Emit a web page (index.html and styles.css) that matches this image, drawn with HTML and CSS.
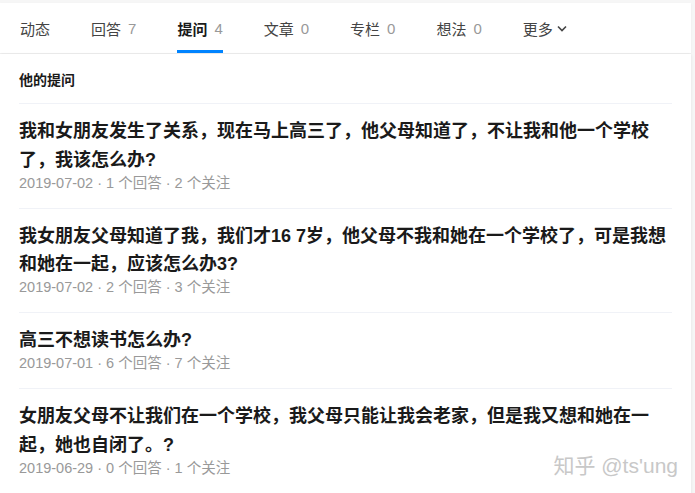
FILE: index.html
```html
<!DOCTYPE html>
<html lang="zh-CN">
<head>
  <meta charset="UTF-8">
  <meta name="viewport" content="width=device-width, initial-scale=1.0">
  <title>他的提问</title>
  <link rel="stylesheet" href="styles.css">
</head>
<body>
  <div class="profile-main">
    <!-- 顶部标签 -->
    <ul class="tabs">
      <li class="tab">动态</li>
      <li class="tab">回答<span class="tab-count">7</span></li>
      <li class="tab tab-active">提问<span class="tab-count">4</span></li>
      <li class="tab">文章<span class="tab-count">0</span></li>
      <li class="tab">专栏<span class="tab-count">0</span></li>
      <li class="tab">想法<span class="tab-count">0</span></li>
      <li class="tab">更多<svg class="tab-arrow" width="10" height="7" viewBox="0 0 10 7"><path d="M1 1.5l4 4 4-4" fill="none" stroke="#444" stroke-width="1.6"/></svg></li>
    </ul>

    <!-- 提问列表 -->
    <div class="list-card">
      <h2 class="list-header">他的提问</h2>

      <div class="list-item">
        <h3 class="item-title">我和女朋友发生了关系，现在马上高三了，他父母知道了，不让我和他一个学校了，我该怎么办?</h3>
        <div class="item-meta">2019-07-02 · 1 个回答 · 2 个关注</div>
      </div>
      <div class="list-item">
        <h3 class="item-title">我女朋友父母知道了我，我们才16 7岁，他父母不我和她在一个学校了，可是我想和她在一起，应该怎么办3?</h3>
        <div class="item-meta">2019-07-02 · 2 个回答 · 3 个关注</div>
      </div>
      <div class="list-item">
        <h3 class="item-title">高三不想读书怎么办?</h3>
        <div class="item-meta">2019-07-01 · 6 个回答 · 7 个关注</div>
      </div>
      <div class="list-item">
        <h3 class="item-title">女朋友父母不让我们在一个学校，我父母只能让我会老家，但是我又想和她在一起，她也自闭了。?</h3>
        <div class="item-meta">2019-06-29 · 0 个回答 · 1 个关注</div>
      </div>

      <div class="watermark">知乎 @ts'ung</div>
    </div>
  </div>
</body>
</html>
```

FILE: styles.css
```css
* {
  margin: 0;
  padding: 0;
  box-sizing: border-box;
}

body {
  background-color: #f6f6f6;
  font-family: "Liberation Sans", "Noto Sans CJK SC", sans-serif;
  color: #1a1a1a;
  overflow: hidden;
}

.profile-main {
  width: 691px;
  padding-top: 3px;
}

.tabs {
  list-style: none;
  display: flex;
  gap: 41px;
  height: 50px;
  padding-left: 20px;
  margin-bottom: 1px;
  background: #fff;
  box-shadow: 0 1px 2px rgba(26, 26, 26, 0.06);
}

.tab {
  position: relative;
  display: flex;
  align-items: center;
  font-size: 15px;
  color: #444;
}

.tab-count {
  margin-left: 7px;
  color: #999;
}

.tab-active {
  color: #1a1a1a;
  font-weight: 700;
}

.tab-active .tab-count {
  font-weight: 400;
}

.tab-active::after {
  content: "";
  position: absolute;
  left: 0;
  right: 0;
  bottom: 0;
  height: 3px;
  background: #0084ff;
}

.tab-arrow {
  margin-left: 4px;
  margin-top: 1px;
}

.list-card {
  position: relative;
  background: #fff;
  padding: 0 19px;
  box-shadow: 0 1px 3px rgba(26, 26, 26, 0.1);
}

.list-header {
  font-size: 14px;
  font-weight: 700;
  line-height: 20px;
  padding: 16px 0 13px;
  border-bottom: 1px solid #f0f2f7;
}

.list-item {
  padding: 13px 0 16px;
  border-bottom: 1px solid #f0f2f7;
}

.list-item:last-of-type {
  border-bottom: none;
}

.item-title {
  font-size: 18px;
  font-weight: 700;
  line-height: 1.6;
}

.item-meta {
  font-size: 14.5px;
  line-height: 17px;
  color: #999;
}

.watermark {
  position: absolute;
  right: 13px;
  bottom: 16px;
  font-size: 21px;
  line-height: 24px;
  color: #c8c8c8;
}
```
